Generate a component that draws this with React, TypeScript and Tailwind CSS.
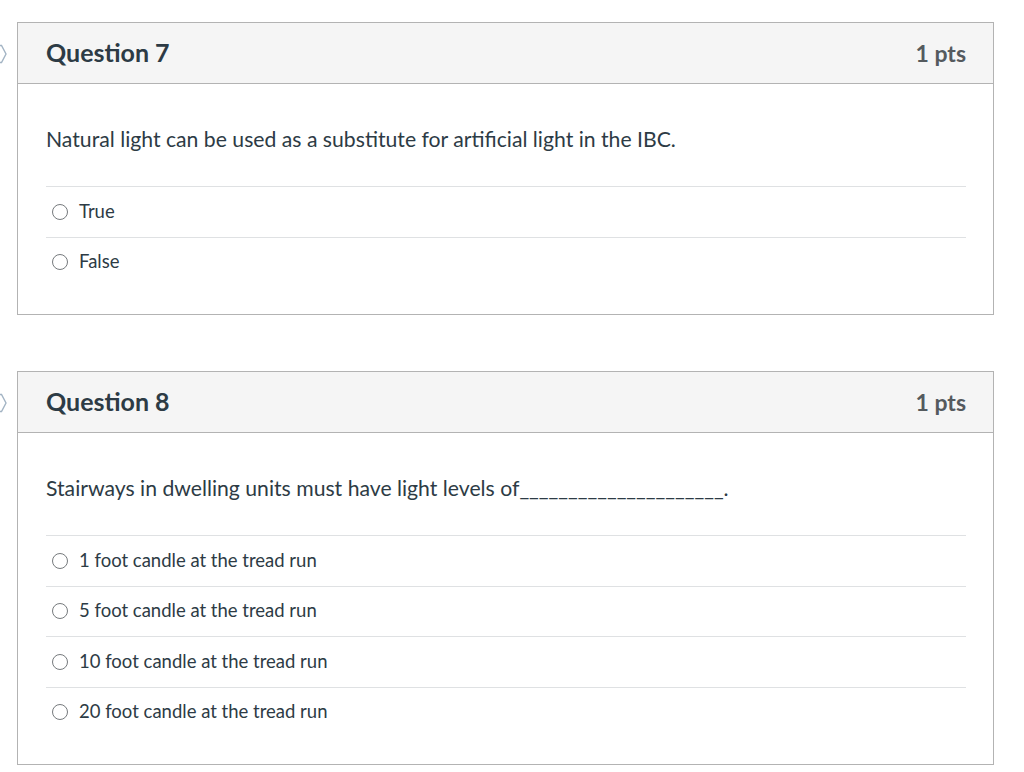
import React from "react";

type Q = { num: number; text: string; answers: string[] };

const questions: Q[] = [
  {
    num: 7,
    text: "Natural light can be used as a substitute for artificial light in the IBC.",
    answers: ["True", "False"],
  },
  {
    num: 8,
    text: "Stairways in dwelling units must have light levels of_____________________.",
    answers: [
      "1 foot candle at the tread run",
      "5 foot candle at the tread run",
      "10 foot candle at the tread run",
      "20 foot candle at the tread run",
    ],
  },
];

function Marker() {
  return (
    <svg width="17" height="20" viewBox="0 0 17 20" className="mt-[22px] shrink-0">
      <path d="M-2 1.5 L1.5 1.5 L6 10 L1.5 18.5 L-2 18.5" fill="none" stroke="#a3b4c4" strokeWidth="1.4" />
    </svg>
  );
}

function Card({ q }: { q: Q }) {
  return (
    <div className="flex">
      <Marker />
      <div className="w-[977px] border border-[#b3b3b3] bg-white">
        <div className="flex h-[61px] items-center justify-between border-b border-[#b3b3b3] bg-[#f5f5f5] pl-[28px] pr-[27px]">
          <span className="text-[25px] font-bold text-[#2d3b45]">Question {q.num}</span>
          <span className="text-[23px] font-bold text-[#555a5e]">1 pts</span>
        </div>
        <div className="pl-[28px] pr-[27px] pt-[41px] pb-[27px]">
          <div className="mb-[33px] text-[21.2px] leading-[28px] text-[#2d3b45]">{q.text}</div>
          {q.answers.map((a) => (
            <div key={a} className="flex h-[50.5px] items-center border-t border-[#dfe1e3] pl-[6px]">
              <span className="h-[16px] w-[16px] shrink-0 rounded-full border border-[#767a7d] bg-white" />
              <span className="ml-[11px] text-[18.5px] text-[#2d3b45]">{a}</span>
            </div>
          ))}
        </div>
      </div>
    </div>
  );
}

export default function App() {
  return (
    <div className="min-h-[772px] bg-white pt-[22px]" style={{ fontFamily: "Lato, 'Liberation Sans', sans-serif" }}>
      <div className="flex flex-col gap-[56px]">
        {questions.map((q) => (
          <Card key={q.num} q={q} />
        ))}
      </div>
    </div>
  );
}
